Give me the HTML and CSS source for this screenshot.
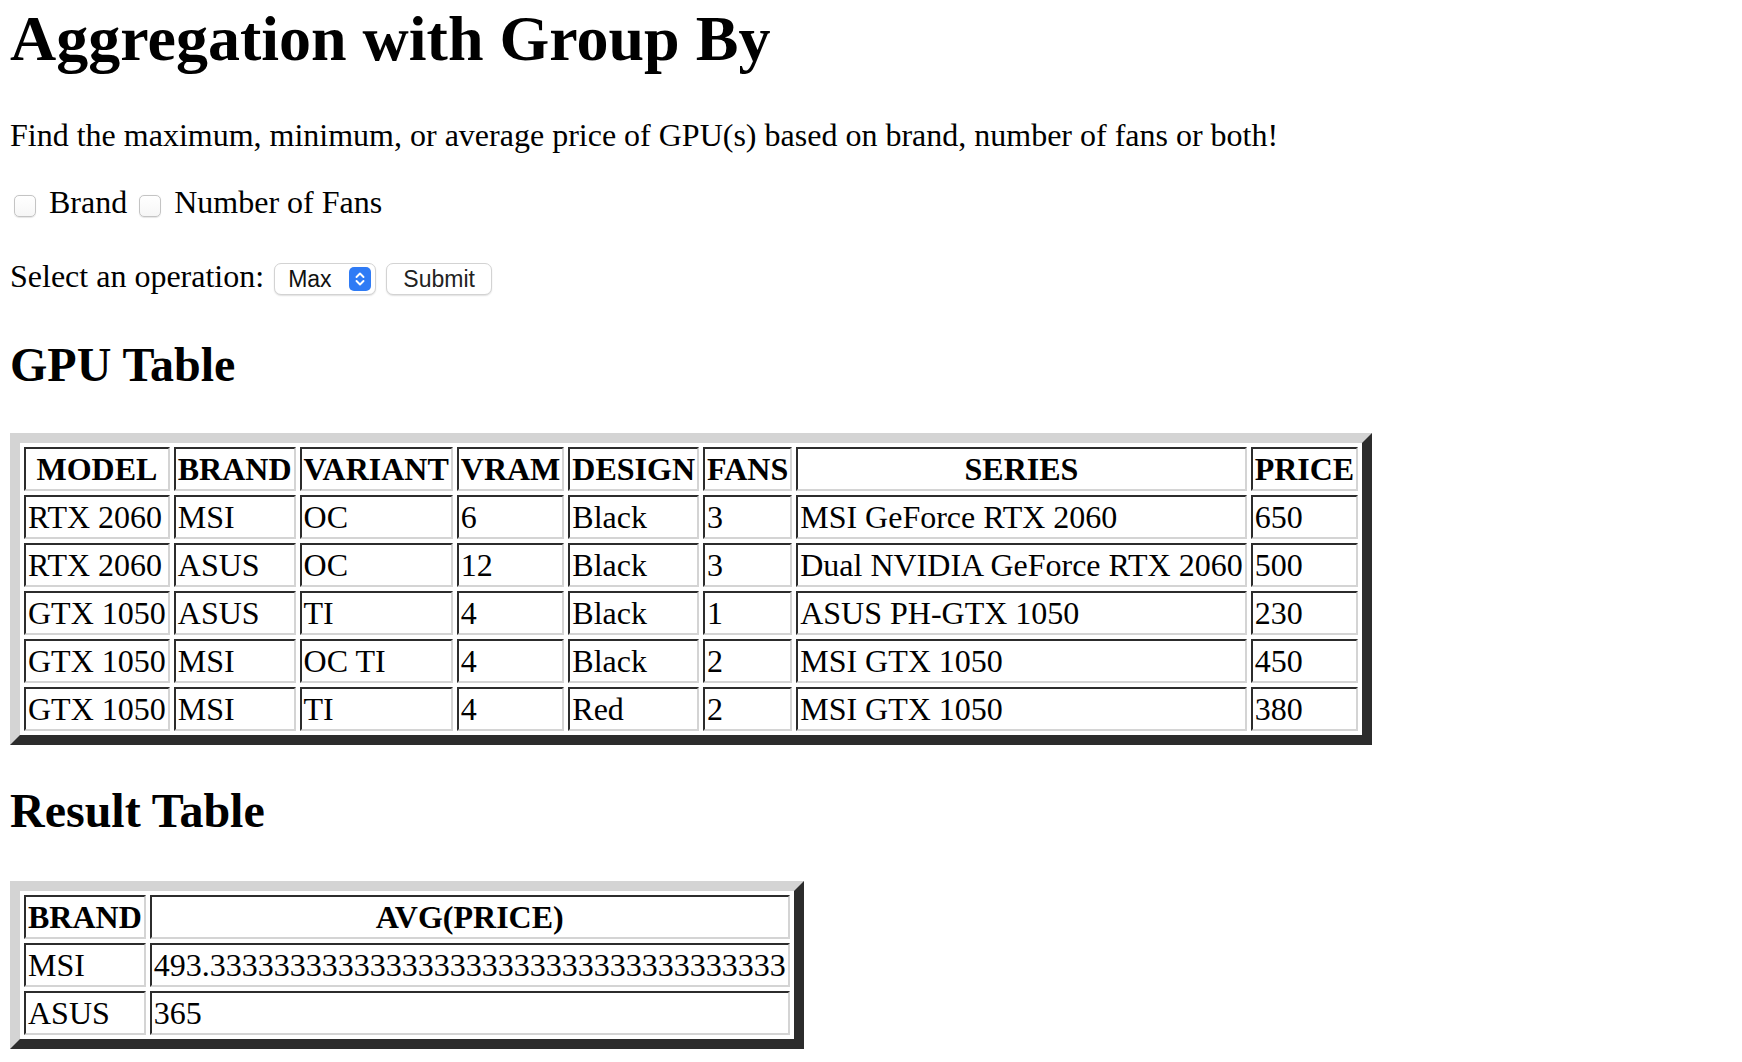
FILE: index.html
```html
<!DOCTYPE html>
<html lang="en">
<head>
<meta charset="utf-8">
<title>Aggregation with Group By</title>
<link rel="stylesheet" href="styles.css">
</head>
<body>
<h1 class="title">Aggregation with Group By</h1>
<p class="intro">Find the maximum, minimum, or average price of GPU(s) based on brand, number of fans or both!</p>
<div class="checks"><span class="checkbox"></span> Brand <span class="checkbox"></span> Number of Fans</div>
<div class="ops">Select an operation: <span class="select"><span class="select-label">Max</span><svg class="select-arrows" width="22" height="24" viewBox="0 0 22 24"><rect x="0" y="0" width="22" height="24" rx="5" fill="#2f7bf5"/><path d="M7.5 10 L11 6.5 L14.5 10" fill="none" stroke="#fff" stroke-width="1.9" stroke-linecap="round" stroke-linejoin="round"/><path d="M7.5 14 L11 17.5 L14.5 14" fill="none" stroke="#fff" stroke-width="1.9" stroke-linecap="round" stroke-linejoin="round"/></svg></span> <span class="button">Submit</span></div>
<h2 class="section gpu-head">GPU Table</h2>
<table class="grid gpu">
<tr><th>MODEL</th><th>BRAND</th><th>VARIANT</th><th>VRAM</th><th>DESIGN</th><th>FANS</th><th>SERIES</th><th>PRICE</th></tr>
<tr><td>RTX 2060</td><td>MSI</td><td>OC</td><td>6</td><td>Black</td><td>3</td><td>MSI GeForce RTX 2060</td><td>650</td></tr>
<tr><td>RTX 2060</td><td>ASUS</td><td>OC</td><td>12</td><td>Black</td><td>3</td><td>Dual NVIDIA GeForce RTX 2060</td><td>500</td></tr>
<tr><td>GTX 1050</td><td>ASUS</td><td>TI</td><td>4</td><td>Black</td><td>1</td><td>ASUS PH-GTX 1050</td><td>230</td></tr>
<tr><td>GTX 1050</td><td>MSI</td><td>OC TI</td><td>4</td><td>Black</td><td>2</td><td>MSI GTX 1050</td><td>450</td></tr>
<tr><td>GTX 1050</td><td>MSI</td><td>TI</td><td>4</td><td>Red</td><td>2</td><td>MSI GTX 1050</td><td>380</td></tr>
</table>
<h2 class="section result-head">Result Table</h2>
<table class="grid result">
<tr><th>BRAND</th><th>AVG(PRICE)</th></tr>
<tr><td>MSI</td><td>493.333333333333333333333333333333333333</td></tr>
<tr><td>ASUS</td><td>365</td></tr>
</table>
</body>
</html>
```

FILE: styles.css
```css
html, body {
  background: #ffffff;
}
body {
  margin: 0;
  padding: 0 0 0 10px;
  font-family: "Liberation Serif", "Times New Roman", serif;
  font-size: 32px;
  color: #000;
}
.title {
  margin: 2px 0 0;
  font-size: 64px;
  line-height: 74px;
  font-weight: bold;
}
.intro {
  margin: 41px 0 0;
  line-height: 37px;
}
.checks {
  margin-top: 30px;
  line-height: 37px;
}
.checkbox {
  display: inline-block;
  width: 22px;
  height: 22px;
  box-sizing: border-box;
  border: 1px solid #c4c4c4;
  border-radius: 5px;
  background: linear-gradient(#ffffff, #f6f6f6);
  box-shadow: 0 0.5px 1px rgba(0,0,0,0.1);
  vertical-align: -4px;
  margin: 0 5px 0 4px;
}
.ops {
  margin-top: 37px;
  line-height: 37px;
}
.select, .button {
  display: inline-flex;
  align-items: center;
  box-sizing: border-box;
  height: 32px;
  border: 1px solid #d3d3d3;
  border-radius: 7px;
  background: #fff;
  box-shadow: 0 1px 1.5px rgba(0,0,0,0.12);
  font-family: "Liberation Sans", Arial, sans-serif;
  font-size: 23px;
  line-height: 30px;
  vertical-align: baseline;
  margin-left: 2px;
}
.select {
  width: 102px;
  padding: 0 0 0 13px;
  justify-content: space-between;
}
.select-label {
  color: #111;
}
.select-arrows {
  margin-right: 4px;
  flex: none;
}
.button {
  width: 106px;
  justify-content: center;
  color: #222;
}
.section {
  font-size: 48px;
  line-height: 55px;
  font-weight: bold;
  margin: 0;
}
.gpu-head {
  margin-top: 42px;
}
.result-head {
  margin-top: 38px;
}
.grid {
  border-style: solid;
  border-width: 10px;
  border-color: #d4d4d4 #2c2c2c #2c2c2c #d4d4d4;
  border-spacing: 4px;
  border-collapse: separate;
  font-size: 32px;
}
.gpu {
  margin-top: 41px;
}
.result {
  margin-top: 43px;
}
.grid th, .grid td {
  border-style: solid;
  border-width: 2px;
  border-color: #2c2c2c #d4d4d4 #d4d4d4 #2c2c2c;
  padding: 2px;
  line-height: 36px;
  white-space: nowrap;
}
.grid th {
  font-weight: bold;
  text-align: center;
}
.grid td {
  text-align: left;
}
```
